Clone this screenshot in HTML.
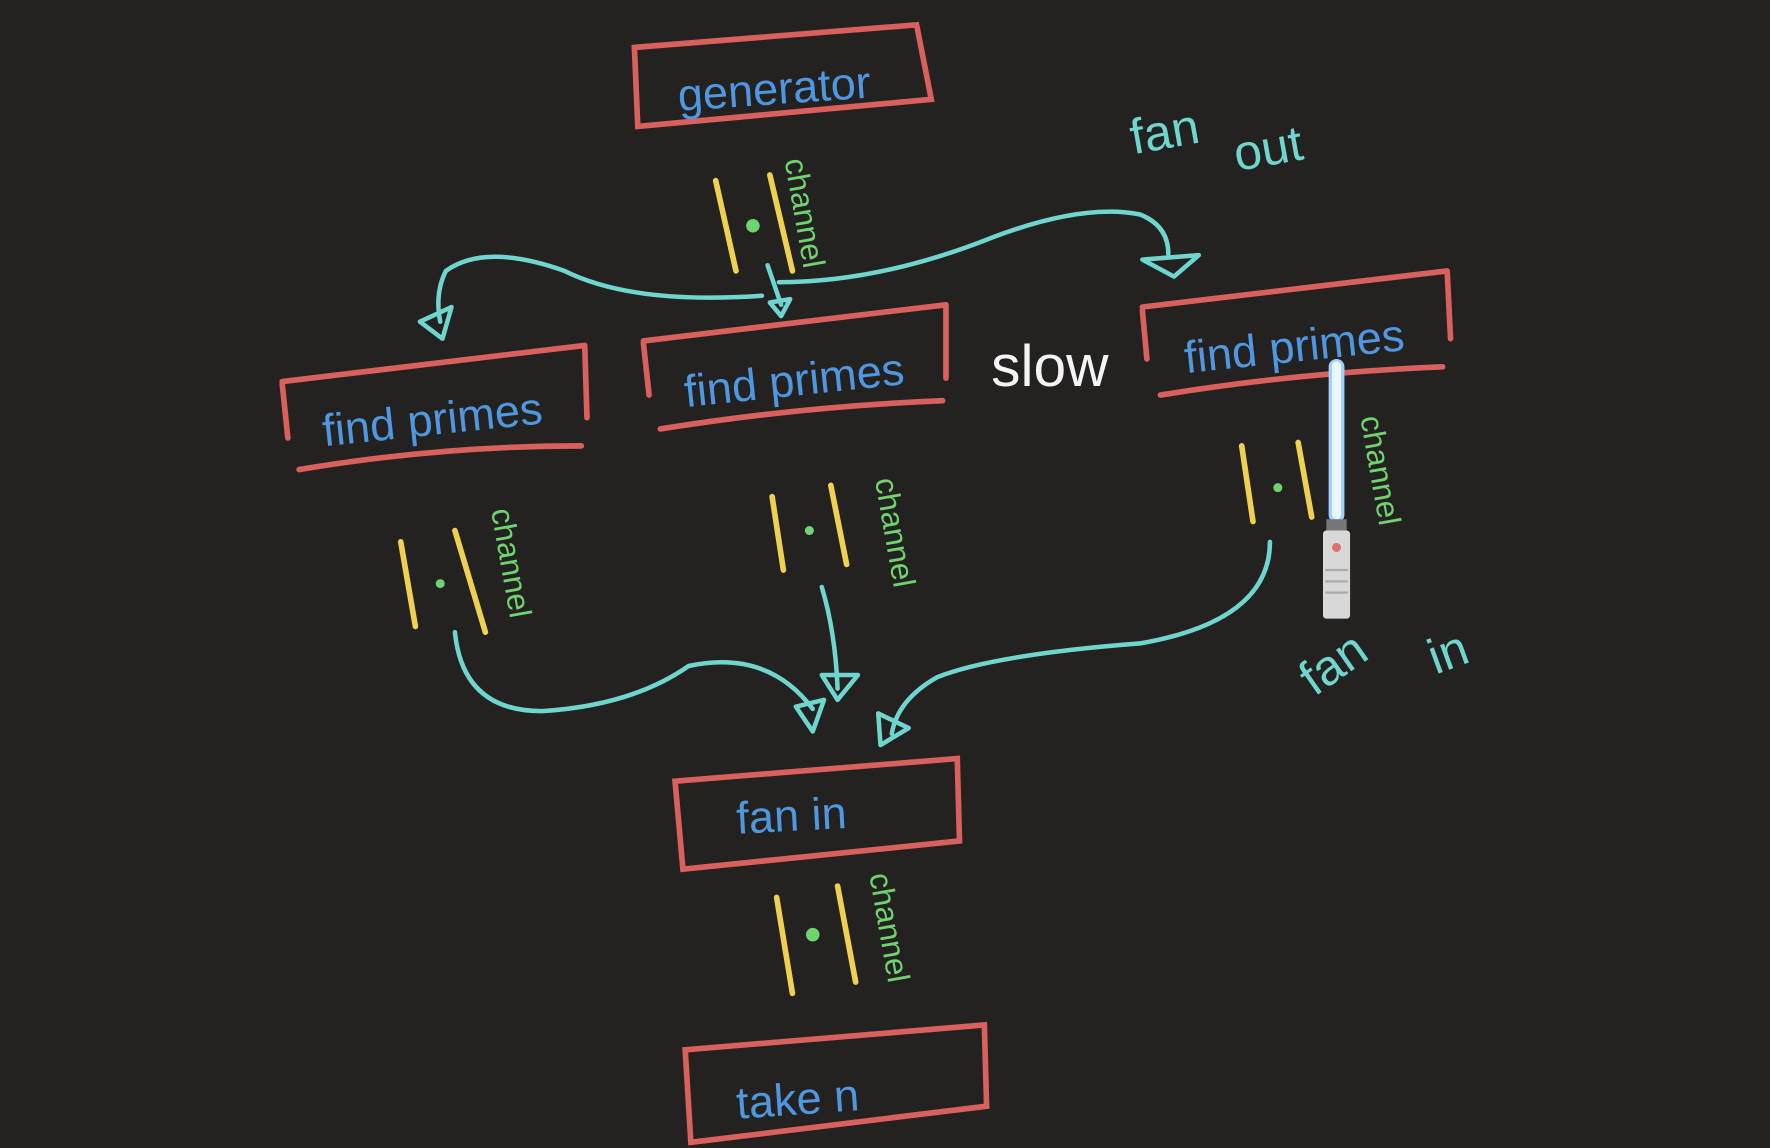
<!DOCTYPE html>
<html><head><style>
html,body{margin:0;padding:0;background:#242220;}
svg{display:block}
text{font-family:"Liberation Sans",sans-serif}
</style></head><body>
<svg width="1770" height="1148" viewBox="0 0 1568 1017" preserveAspectRatio="none" xmlns="http://www.w3.org/2000/svg">
<rect width="1568" height="1017" fill="#242220"/>
<g fill="none" stroke="#d9605c" stroke-width="5" stroke-linecap="round">
<path d="M562 42 L812 22 L825 88 L565 112 Z"/>
<path d="M250 338 L518 306 M250 340 L255 388 M518 306 L520 370 M265 416 Q390 395 515 395"/>
<path d="M570 302 L838 270 M570 304 L575 350 M838 270 L838 335 M585 380 Q710 360 835 355"/>
<path d="M1012 272 L1282 240 M1012 275 L1016 318 M1282 240 L1285 300 M1028 350 Q1150 330 1278 325"/>
<path d="M598 692 L848 672 L850 745 L605 770 Z"/>
<path d="M607 930 L872 908 L874 980 L612 1012 Z"/>
</g>
<g fill="#4f97e0" font-size="40">
<text x="600" y="92" transform="rotate(-4 690 75)">generator</text>
<text x="285" y="385" transform="rotate(-6 385 370)">find primes</text>
<text x="605" y="350" transform="rotate(-6 708 330)">find primes</text>
<text x="1048" y="320" transform="rotate(-6 1150 300)">find primes</text>
<text x="652" y="735" transform="rotate(-3 722 718)">fan in</text>
<text x="652" y="985" transform="rotate(-4 740 970)">take n</text>
</g>
<text x="878" y="342" fill="#f4f4f4" font-size="52">slow</text>
<g fill="#6fd6cf" font-size="44">
<text x="1000" y="130" transform="rotate(-10 1040 110)">fan</text>
<text x="1090" y="145" transform="rotate(-10 1130 115)">out</text>
<text x="1140" y="600" transform="rotate(-35 1180 570)">fan</text>
<text x="1265" y="590" transform="rotate(-20 1290 575)">in</text>
</g>
<!-- channels -->
<g stroke="#f0d050" stroke-width="5" stroke-linecap="round" fill="none">
<path d="M634 160 L652 240 M682 155 L702 240"/>
<path d="M355 480 L368 555 M403 470 L430 560"/>
<path d="M684 440 L694 505 M736 430 L750 500"/>
<path d="M1100 395 L1110 462 M1150 392 L1162 458"/>
<path d="M688 795 L702 880 M742 785 L758 870"/>
</g>
<g fill="#6fd36f">
<circle cx="667" cy="200" r="6"/><circle cx="390" cy="517" r="4"/><circle cx="717" cy="470" r="4"/><circle cx="1132" cy="432" r="4"/><circle cx="720" cy="828" r="6"/>
</g>
<g fill="#6fd36f" font-size="28">
<text x="695" y="142" transform="rotate(80 695 142)">channel</text>
<text x="435" y="452" transform="rotate(80 435 452)">channel</text>
<text x="775" y="425" transform="rotate(80 775 425)">channel</text>
<text x="1205" y="370" transform="rotate(80 1205 370)">channel</text>
<text x="770" y="775" transform="rotate(80 770 775)">channel</text>
</g>
<!-- arrows -->
<g stroke="#6fd6cf" stroke-width="4" fill="none" stroke-linecap="round" stroke-linejoin="round">
<path d="M675 262 Q560 270 500 240 Q430 215 395 240 Q385 260 390 285"/>
<path d="M372 285 L400 272 L392 300 Z"/>
<path d="M690 250 Q780 250 880 210 Q960 180 1010 190 Q1035 200 1035 225"/>
<path d="M1012 230 L1062 226 L1040 245 Z"/>
<path d="M680 235 L692 270"/><path d="M682 268 L700 265 L692 280 Z"/>
<path d="M403 560 Q410 630 480 630 Q560 625 610 590 Q680 575 720 628"/>
<path d="M705 626 L730 620 L720 648 Z"/>
<path d="M728 520 Q740 560 742 610"/><path d="M728 598 L760 598 L742 620 Z"/>
<path d="M1125 480 Q1125 550 1010 570 Q880 580 830 600 Q795 620 790 650"/>
<path d="M778 632 L805 645 L780 660 Z"/>
</g>
<!-- lightsaber -->
<rect x="1177" y="318" width="14" height="145" rx="7" fill="#9fd0ff"/>
<rect x="1180" y="320" width="8" height="140" rx="4" fill="#eaf6ff"/>
<rect x="1175" y="460" width="18" height="12" fill="#777"/>
<rect x="1172" y="470" width="24" height="78" rx="3" fill="#d8d8d8"/>
<circle cx="1184" cy="485" r="4" fill="#e07070"/>
<g stroke="#aaa" stroke-width="2"><line x1="1174" y1="505" x2="1194" y2="505"/><line x1="1174" y1="515" x2="1194" y2="515"/><line x1="1174" y1="525" x2="1194" y2="525"/></g>
</svg>
</body></html>
